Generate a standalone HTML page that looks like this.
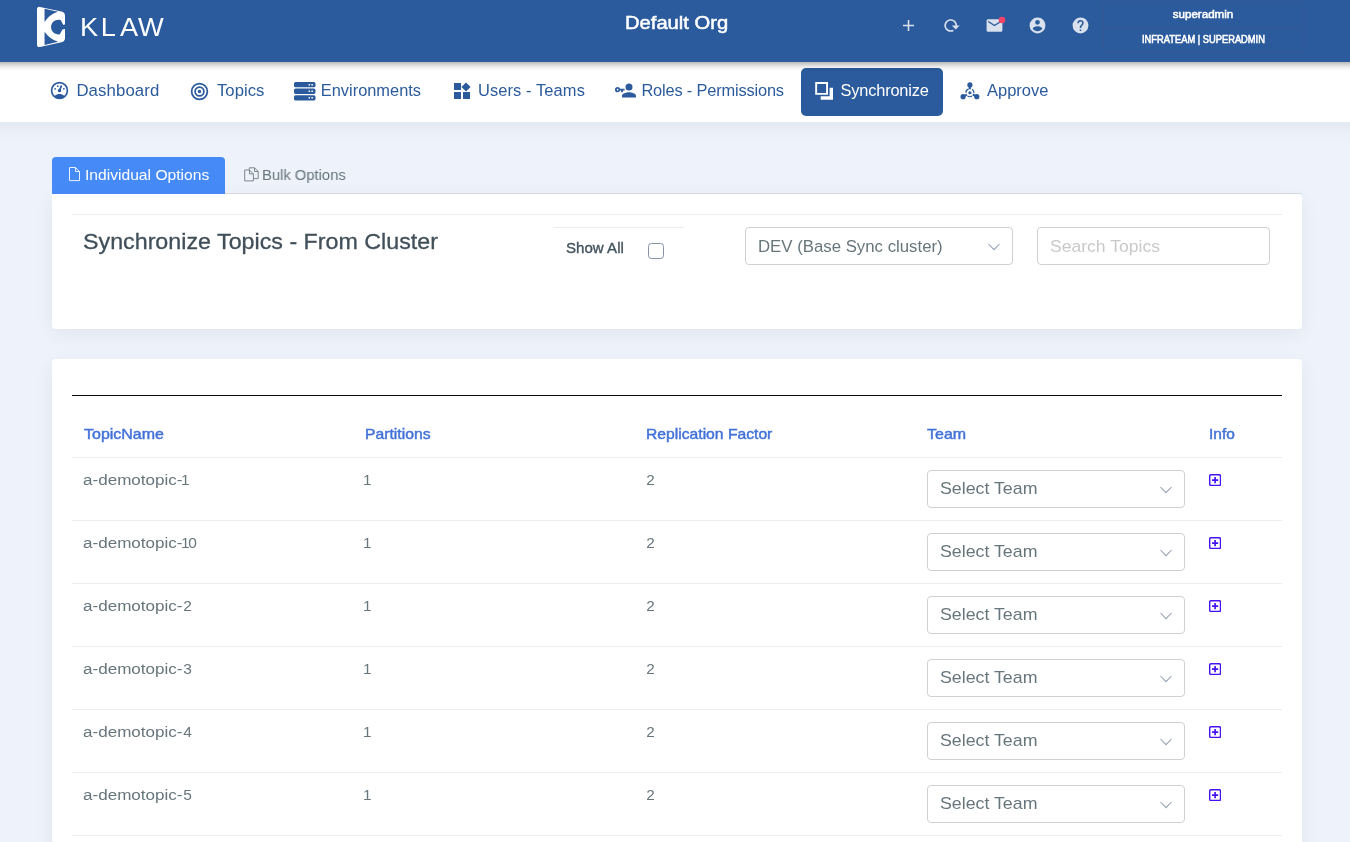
<!DOCTYPE html>
<html lang="en">
<head>
<meta charset="utf-8">
<title>Klaw - Synchronize Topics</title>
<style>
*{box-sizing:border-box}
html,body{margin:0;padding:0}
body{width:1350px;height:842px;overflow:hidden;background:#eef2fa;font-family:"Liberation Sans",Arial,sans-serif;color:#67757c;position:relative}
.t{position:absolute;white-space:nowrap;line-height:1;margin:0;padding:0;transform-origin:0 50%}
svg{display:block;position:absolute}
#topbar,#nav,#tabs,.card{will-change:transform}

/* ---------- top header ---------- */
#topbar{position:absolute;left:0;top:0;width:1350px;height:62px;background:#2b5b9c;z-index:5}
#topbar::before{content:"";position:absolute;left:-40px;right:-40px;top:0;height:62px;box-shadow:0 2px 7px rgba(0,0,0,.38);pointer-events:none}
#topbar .t{color:#fff}
.hicon{fill:#d9e0ee}
#userbox{position:absolute;left:1101.5px;top:1px;width:203px;height:52px;border:2px solid rgba(90,80,140,.12);border-radius:4px}
#userbox .row1{position:absolute;left:0;top:0;width:199px;height:25px;border-bottom:2px solid rgba(90,80,140,.12)}

/* ---------- nav ---------- */
#nav{position:absolute;left:0;top:62px;width:1350px;height:60px;background:#fff;z-index:3}
#nav::before{content:"";position:absolute;left:-60px;right:-60px;top:0;height:60px;box-shadow:0 5px 20px rgba(0,0,0,.06);pointer-events:none}
#nav .t{color:#2b5b9c;font-size:16.4px}
#nav svg{fill:#2b5b9c}
#nav .active{position:absolute;left:801px;top:6px;width:142px;height:48px;background:#2b5b9c;border-radius:5px}
#nav .active .t{color:#fff}
#nav .active svg{fill:#fff}

/* ---------- tabs ---------- */
#tabs{position:absolute;left:52px;top:157px;width:1250px;height:37px;border-bottom:1px solid #d9dde3}
#tabs .on{position:absolute;left:0;top:0;width:173px;height:37px;background:#468af8;border-radius:4px 4px 0 0}
#tabs .on .t{color:#fff}
#tabs .t{color:#67757c}

/* ---------- cards ---------- */
.card{position:absolute;left:52px;width:1250px;background:#fff;box-shadow:0 5px 20px rgba(0,0,0,.06)}
#card1{top:194px;height:135px;border-radius:0 4px 4px 4px}
#card2{top:359px;height:520px;border-radius:4px}
.hr{position:absolute;left:20px;width:1210px;height:1px;background:#ededed}
.field{position:absolute;height:38px;border:1px solid #d0d0d2;border-radius:4px;background:#fff}
.chev{stroke:#959fb2;stroke-width:1.050;fill:none}
#chk{position:absolute;left:596px;top:49px;width:16px;height:16px;border:1px solid #8492a4;border-radius:3.500px;background:#fff}

/* ---------- table ---------- */
table{position:absolute;left:20px;top:51px;width:1210px;border-collapse:collapse;table-layout:fixed}
th,td{padding:0;text-align:left;vertical-align:top;position:relative}
th{height:47px;color:#4272d8;font-weight:400;font-size:14.600px;-webkit-text-stroke:.45px #4272d8}
td{height:63px;border-top:1px solid #ededed;font-size:15.300px;color:#67757c}
td span.nm{left:11.100px;transform:scaleX(1.115);transform-origin:0 50%}
td span.nm b{position:static;display:inline-block;font-weight:400;transform:scaleX(.91);transform-origin:0 50%;margin-left:1.200px}
td span.nm b.one{margin-left:-1.700px;letter-spacing:-1.600px}
td span.d1{left:9.800px}
th span,td span{position:absolute;left:11.600px;white-space:nowrap;line-height:1;transform-origin:0 50%}
td .field{left:11px;top:12px;width:258px}
td .info{left:11.600px;top:16.250px}
</style>
</head>
<body>

<header id="topbar">
  <svg id="logo-mark" style="left:36px;top:6px" width="31" height="42" viewBox="0 0 31 42">
    <path fill="#fff" d="M1 3.600Q1 .5 4 .9L25.400 5.600Q29 6.400 29 10V32Q29 35.400 25.400 36.300L4 41Q1 41.400 1 38.400Z"/>
    <path fill="#2b5b9c" d="M8.550 2.850L22 5.850Q13.600 8.500 8.550 15.900Z"/>
    <path fill="#2b5b9c" d="M8.550 38.900L22.200 35.800Q13.600 33.100 8.550 25.700Z"/>
    <path fill="#2b5b9c" d="M23.700 13.800C18.500 13.400 15.100 16.600 15.100 21.100C15.100 25.600 18.500 28.800 23.700 28.400L26.400 23.600L29.100 23V18.300L27.300 18.900L24.900 14.300Z"/>
  </svg>
  <svg id="logo-text" style="left:0;top:0" width="200" height="62" viewBox="0 0 200 62"><text transform="scale(1.09,1)" x="73.500 92.500 110.100 126.700" y="35.600" fill="#fff" font-family="Liberation Sans, Arial, sans-serif" font-size="25">KLAW</text></svg>

  <div class="t" style="left:625.300px;top:13.800px;font-size:18.600px;-webkit-text-stroke:.5px #fff;transform:scaleX(1.085)">Default Org</div>

  <svg class="hicon" style="left:899px;top:15.800px" width="19" height="19" viewBox="0 0 24 24"><path d="M19,13H13V19H11V13H5V11H11V5H13V11H19V13Z"/></svg>
  <svg class="hicon" style="left:942px;top:15.800px" width="19" height="19" viewBox="0 0 24 24"><path d="M19,12H22.32L17.37,16.95L12.42,12H16.97C17,10.46 16.42,8.93 15.24,7.75C12.9,5.41 9.1,5.41 6.76,7.75C4.42,10.09 4.42,13.9 6.76,16.24C8.6,18.08 11.36,18.47 13.58,17.41L15.05,18.88C12,20.69 8,20.29 5.34,17.65C2.22,14.53 2.23,9.47 5.35,6.35C8.5,3.22 13.53,3.21 16.66,6.34C18.22,7.9 19,9.95 19,12Z"/></svg>
  <svg class="hicon" style="left:984.5px;top:15.800px" width="19" height="19" viewBox="0 0 24 24"><path d="M20,8L12,13L4,8V6L12,11L20,6M20,4H4C2.89,4 2,4.89 2,6V18A2,2 0 0,0 4,20H20A2,2 0 0,0 22,18V6C22,4.89 21.1,4 20,4Z"/></svg>
  <svg style="left:998px;top:16px" width="8" height="8" viewBox="0 0 8 8"><circle cx="4" cy="4" r="3.3" fill="#f2436a"/></svg>
  <svg class="hicon" style="left:1028px;top:16.300px" width="19" height="19" viewBox="0 0 24 24"><path d="M12,19.2C9.5,19.2 7.29,17.92 6,16C6.03,14 10,12.9 12,12.9C14,12.9 17.97,14 18,16C16.710,17.92 14.5,19.2 12,19.2M12,5A3,3 0 0,1 15,8A3,3 0 0,1 12,11A3,3 0 0,1 9,8A3,3 0 0,1 12,5M12,2A10,10 0 0,0 2,12A10,10 0 0,0 12,22A10,10 0 0,0 22,12C22,6.47 17.5,2 12,2Z"/></svg>
  <svg class="hicon" style="left:1071px;top:16.300px" width="19" height="19" viewBox="0 0 24 24"><path d="M15.07,11.25L14.17,12.17C13.45,12.89 13,13.5 13,15H11V14.5C11,13.39 11.45,12.39 12.17,11.67L13.41,10.41C13.78,10.05 14,9.55 14,9C14,7.89 13.1,7 12,7A2,2 0 0,0 10,9H8A4,4 0 0,1 12,5A4,4 0 0,1 16,9C16,9.88 15.64,10.67 15.07,11.25M13,19H11V17H13M12,2A10,10 0 0,0 2,12A10,10 0 0,0 12,22A10,10 0 0,0 22,12C22,6.47 17.5,2 12,2Z"/></svg>

  <div id="userbox">
    <div class="row1"></div>
    <div class="t" style="left:69.200px;top:5px;font-size:11.600px;-webkit-text-stroke:.55px #fff">superadmin</div>
    <div class="t" style="left:38.200px;top:31.600px;font-size:10.200px;-webkit-text-stroke:.55px #fff;transform:scaleX(.915)">INFRATEAM | SUPERADMIN</div>
  </div>
</header>

<nav id="nav">
  <svg style="left:49.200px;top:18.100px" width="21" height="21" viewBox="0 0 24 24"><path d="M12,2A10,10 0 0,0 2,12A10,10 0 0,0 12,22A10,10 0 0,0 22,12A10,10 0 0,0 12,2M12,4A8,8 0 0,1 20,12C20,14.4 19,16.5 17.3,18C15.9,16.7 14,16 12,16C10,16 8.2,16.7 6.700,18C5,16.5 4,14.4 4,12A8,8 0 0,1 12,4M14,5.890C13.62,5.9 13.26,6.15 13.1,6.54L11.81,9.77L11.71,10C11,10.13 10.41,10.6 10.14,11.26C9.73,12.29 10.23,13.45 11.26,13.86C12.29,14.27 13.45,13.77 13.86,12.74C14.12,12.08 14,11.32 13.57,10.76L13.67,10.5L14.96,7.29L14.97,7.26C15.17,6.75 14.92,6.17 14.41,5.96C14.28,5.91 14.15,5.89 14,5.890M10,6A1,1 0 0,0 9,7A1,1 0 0,0 10,8A1,1 0 0,0 11,7A1,1 0 0,0 10,6M7,9A1,1 0 0,0 6,10A1,1 0 0,0 7,11A1,1 0 0,0 8,10A1,1 0 0,0 7,9M17,9A1,1 0 0,0 16,10A1,1 0 0,0 17,11A1,1 0 0,0 18,10A1,1 0 0,0 17,9Z"/></svg>
  <div class="t" style="left:76.4px;top:21px;font-size:16.800px;letter-spacing:.1px">Dashboard</div>

  <svg style="left:189.450px;top:18.900px" width="21" height="21" viewBox="0 0 24 24"><path d="M12,2A10,10 0 0,0 2,12A10,10 0 0,0 12,22A10,10 0 0,0 22,12A10,10 0 0,0 12,2M12,4A8,8 0 0,1 20,12A8,8 0 0,1 12,20A8,8 0 0,1 4,12A8,8 0 0,1 12,4M12,6A6,6 0 0,0 6,12A6,6 0 0,0 12,18A6,6 0 0,0 18,12A6,6 0 0,0 12,6M12,8A4,4 0 0,1 16,12A4,4 0 0,1 12,16A4,4 0 0,1 8,12A4,4 0 0,1 12,8M12,10A2,2 0 0,0 10,12A2,2 0 0,0 12,14A2,2 0 0,0 14,12A2,2 0 0,0 12,10Z"/></svg>
  <div class="t" style="left:216.900px;top:20.300px;font-size:16.500px;transform:scaleX(1.012)">Topics</div>

  <svg style="left:294px;top:20px" width="21.5" height="18.5" viewBox="0 0 21.5 18.5"><path fill-rule="evenodd" d="M1.6 0H19.9A1.6 1.6 0 0 1 21.500 1.6V3.700A1.6 1.6 0 0 1 19.9 5.300H1.6A1.6 1.6 0 0 1 0 3.700V1.600A1.6 1.6 0 0 1 1.600 0ZM14.6 1.900V3.400H16.1V1.900ZM17.4 1.900V3.400H18.900V1.900ZM1.6 6.600H19.9A1.600 1.600 0 0 1 21.500 8.200V10.300A1.600 1.600 0 0 1 19.900 11.900H1.600A1.600 1.600 0 0 1 0 10.300V8.200A1.600 1.600 0 0 1 1.600 6.600ZM14.600 8.500V10H16.100V8.500ZM17.400 8.500V10H18.900V8.500ZM1.600 13.200H19.900A1.600 1.600 0 0 1 21.500 14.800V16.900A1.600 1.600 0 0 1 19.900 18.500H1.600A1.600 1.600 0 0 1 0 16.900V14.800A1.600 1.600 0 0 1 1.600 13.200ZM14.600 15.100V16.600H16.100V15.100ZM17.400 15.100V16.600H18.900V15.100Z"/></svg>
  <div class="t" style="left:320.8px;top:20.3px;font-size:16.4px">Environments</div>

  <svg style="left:454px;top:20px" width="17" height="17" viewBox="0 0 17 17"><path d="M0 1H7V8H0ZM0 10H7V17H0ZM9 10H16V17H9ZM12 .4L16.600 5L12 9.600L7.400 5Z"/></svg>
  <div class="t" style="left:478px;top:20.3px;font-size:16.450px;letter-spacing:.1px">Users - Teams</div>

  <svg style="left:615px;top:18px" width="21" height="21" viewBox="0 0 24 24"><path d="M11,10V12H9V14H7V12H5.8C5.4,13.2 4.3,14 3,14A3,3 0 0,1 0,11A3,3 0 0,1 3,8C4.3,8 5.4,8.8 5.8,10H11M3,10A1,1 0 0,0 2,11A1,1 0 0,0 3,12A1,1 0 0,0 4,11A1,1 0 0,0 3,10M16,14C18.67,14 24,15.34 24,18V20H8V18C8,15.34 13.33,14 16,14M16,12A4,4 0 0,1 12,8A4,4 0 0,1 16,4A4,4 0 0,1 20,8A4,4 0 0,1 16,12Z"/></svg>
  <div class="t" style="left:641.4px;top:20.3px;font-size:16.400px;letter-spacing:-.17px">Roles - Permissions</div>

  <div class="active">
    <svg style="left:14px;top:14px" width="18" height="18" viewBox="0 0 18 18"><path fill-rule="evenodd" d="M.2 0H13V12.800H.2ZM2.100 1.900V10.900H11.100V1.900ZM14.600 5.700H18V17.800H5.700V14.200H14.600Z"/></svg>
    <div class="t" style="left:39.6px;top:14.3px;font-size:16.4px;letter-spacing:-.2px">Synchronize</div>
  </div>

  <svg style="left:960px;top:18px" width="20" height="20" viewBox="0 0 20 20"><circle cx="9.900" cy="4.900" r="2.600"/><circle cx="3.100" cy="16.700" r="2.600"/><circle cx="16.800" cy="16.700" r="2.600"/><circle cx="9.900" cy="12.750" r="1.600"/><circle cx="9.900" cy="12.750" r="4" fill="none" stroke="#2b5b9c" stroke-width="1.200" stroke-dasharray="4.900 3.480" stroke-dashoffset="-3.840"/><path fill="none" stroke="#2b5b9c" stroke-width="2" d="M9.900 6.500V9.300M3.600 16.400L7 14.500M16.300 16.400L12.800 14.500"/></svg>
  <div class="t" style="left:987px;top:20.3px;font-size:16.5px">Approve</div>
</nav>

<div id="tabs">
  <div class="on">
    <svg style="left:17px;top:9.900px" width="11" height="15" viewBox="0 0 11 15"><path fill="none" stroke="#e9f0ff" stroke-width="1" d="M.5 .5H6.500L10.500 4.500V13.600H.5ZM6.500 .5V4.500H10.500"/></svg>
    <div class="t" style="left:33px;top:9.900px;font-size:15px;transform:scaleX(1.042)">Individual Options</div>
  </div>
  <svg style="left:192px;top:9.700px" width="15" height="15" viewBox="0 0 15 15"><path fill="none" stroke="#7b878e" stroke-width="1" d="M.7 3H5.500L9.400 6.900V13.900H.7ZM5.500 3V6.900H9.400M5.300 2.800V.8H10.500L14.200 4.500V11.600H9.700M10.500 .8V4.500H14.200"/></svg>
  <div class="t" style="left:210px;top:9.900px;font-size:15px;transform:scaleX(.985)">Bulk Options</div>
</div>

<section class="card" id="card1">
  <div class="hr" style="top:20px"></div>
  <h3 class="t" style="left:31px;top:37px;font-size:22px;transform:scaleX(1.057);font-weight:400;color:#414f59;-webkit-text-stroke:.3px #414f59">Synchronize Topics - From Cluster</h3>
  <div style="position:absolute;left:502px;top:33px;width:130px;height:1px;background:#ececec"></div>
  <label class="t" style="left:514.400px;top:46.900px;font-size:14.800px;font-weight:400;-webkit-text-stroke:.35px #42535d;color:#42535d;transform:scaleX(1.02)">Show All</label>
  <div id="chk"></div>
  <div class="field" style="left:693px;top:33px;width:268px">
    <div class="t" style="left:12px;top:10.500px;font-size:16.800px">DEV (Base Sync cluster)</div>
    <svg style="left:241px;top:14.600px" width="14" height="9" viewBox="0 0 14 9"><path class="chev" d="M1.500 1L7 6.700L12.500 1"/></svg>
  </div>
  <div class="field" style="left:985px;top:33px;width:233px">
    <div class="t" style="left:12px;top:11px;font-size:16.800px;transform:scaleX(1.046);color:#c9c9c9">Search Topics</div>
  </div>
</section>

<section class="card" id="card2">
  <div class="hr" style="top:36px;background:#0c0c0c"></div>
  <table>
    <colgroup><col style="width:281.300px"><col style="width:281.300px"><col style="width:281.300px"><col style="width:281.300px"><col></colgroup>
    <thead>
      <tr><th><span style="top:16.600px;transform:scaleX(1.095)">TopicName</span></th><th><span style="top:16.600px;transform:scaleX(1.078)">Partitions</span></th><th><span style="top:16.600px;transform:scaleX(1.074)">Replication Factor</span></th><th><span style="top:16.600px;transform:scaleX(1.095)">Team</span></th><th><span style="top:16.600px;transform:scaleX(1.06)">Info</span></th></tr>
    </thead>
    <tbody>
      <tr><td><span class="nm" style="top:14.200px">a-demotopic-<b class="one">1</b></span></td><td><span class="d1" style="top:14.200px">1</span></td><td><span style="top:14.200px">2</span></td><td><div class="field"><div class="t" style="left:12.600px;top:9.800px;font-size:17px;transform:scaleX(1.045)">Select Team</div><svg style="left:231px;top:15.100px" width="14" height="9" viewBox="0 0 14 9"><path class="chev" d="M1.500 1L7 6.700L12.500 1"/></svg></div></td><td><svg class="info" width="12.200" height="12.200" viewBox="0 0 12.200 12.200"><rect x=".7" y=".7" width="10.800" height="10.800" rx="1.200" fill="none" stroke="#4612f2" stroke-width="1.400"/><path d="M3 6.100H9.200M6.100 3V9.200" stroke="#4612f2" stroke-width="1.700" fill="none"/></svg></td></tr>
      <tr><td><span class="nm" style="top:14.200px">a-demotopic-<b class="one">10</b></span></td><td><span class="d1" style="top:14.200px">1</span></td><td><span style="top:14.200px">2</span></td><td><div class="field"><div class="t" style="left:12.600px;top:9.800px;font-size:17px;transform:scaleX(1.045)">Select Team</div><svg style="left:231px;top:15.100px" width="14" height="9" viewBox="0 0 14 9"><path class="chev" d="M1.500 1L7 6.700L12.500 1"/></svg></div></td><td><svg class="info" width="12.200" height="12.200" viewBox="0 0 12.200 12.200"><rect x=".7" y=".7" width="10.800" height="10.800" rx="1.200" fill="none" stroke="#4612f2" stroke-width="1.400"/><path d="M3 6.100H9.200M6.100 3V9.200" stroke="#4612f2" stroke-width="1.700" fill="none"/></svg></td></tr>
      <tr><td><span class="nm" style="top:14.200px">a-demotopic-<b>2</b></span></td><td><span class="d1" style="top:14.200px">1</span></td><td><span style="top:14.200px">2</span></td><td><div class="field"><div class="t" style="left:12.600px;top:9.800px;font-size:17px;transform:scaleX(1.045)">Select Team</div><svg style="left:231px;top:15.100px" width="14" height="9" viewBox="0 0 14 9"><path class="chev" d="M1.500 1L7 6.700L12.500 1"/></svg></div></td><td><svg class="info" width="12.200" height="12.200" viewBox="0 0 12.200 12.200"><rect x=".7" y=".7" width="10.800" height="10.800" rx="1.200" fill="none" stroke="#4612f2" stroke-width="1.400"/><path d="M3 6.100H9.200M6.100 3V9.200" stroke="#4612f2" stroke-width="1.700" fill="none"/></svg></td></tr>
      <tr><td><span class="nm" style="top:14.200px">a-demotopic-<b>3</b></span></td><td><span class="d1" style="top:14.200px">1</span></td><td><span style="top:14.200px">2</span></td><td><div class="field"><div class="t" style="left:12.600px;top:9.800px;font-size:17px;transform:scaleX(1.045)">Select Team</div><svg style="left:231px;top:15.100px" width="14" height="9" viewBox="0 0 14 9"><path class="chev" d="M1.500 1L7 6.700L12.500 1"/></svg></div></td><td><svg class="info" width="12.200" height="12.200" viewBox="0 0 12.200 12.200"><rect x=".7" y=".7" width="10.800" height="10.800" rx="1.200" fill="none" stroke="#4612f2" stroke-width="1.400"/><path d="M3 6.100H9.200M6.100 3V9.200" stroke="#4612f2" stroke-width="1.700" fill="none"/></svg></td></tr>
      <tr><td><span class="nm" style="top:14.200px">a-demotopic-<b>4</b></span></td><td><span class="d1" style="top:14.200px">1</span></td><td><span style="top:14.200px">2</span></td><td><div class="field"><div class="t" style="left:12.600px;top:9.800px;font-size:17px;transform:scaleX(1.045)">Select Team</div><svg style="left:231px;top:15.100px" width="14" height="9" viewBox="0 0 14 9"><path class="chev" d="M1.500 1L7 6.700L12.500 1"/></svg></div></td><td><svg class="info" width="12.200" height="12.200" viewBox="0 0 12.200 12.200"><rect x=".7" y=".7" width="10.800" height="10.800" rx="1.200" fill="none" stroke="#4612f2" stroke-width="1.400"/><path d="M3 6.100H9.200M6.100 3V9.200" stroke="#4612f2" stroke-width="1.700" fill="none"/></svg></td></tr>
      <tr><td><span class="nm" style="top:14.200px">a-demotopic-<b>5</b></span></td><td><span class="d1" style="top:14.200px">1</span></td><td><span style="top:14.200px">2</span></td><td><div class="field"><div class="t" style="left:12.600px;top:9.800px;font-size:17px;transform:scaleX(1.045)">Select Team</div><svg style="left:231px;top:15.100px" width="14" height="9" viewBox="0 0 14 9"><path class="chev" d="M1.500 1L7 6.700L12.500 1"/></svg></div></td><td><svg class="info" width="12.200" height="12.200" viewBox="0 0 12.200 12.200"><rect x=".7" y=".7" width="10.800" height="10.800" rx="1.200" fill="none" stroke="#4612f2" stroke-width="1.400"/><path d="M3 6.100H9.200M6.100 3V9.200" stroke="#4612f2" stroke-width="1.700" fill="none"/></svg></td></tr>
      <tr><td><span class="nm" style="top:14.200px">a-demotopic-<b>6</b></span></td><td><span class="d1" style="top:14.200px">1</span></td><td><span style="top:14.200px">2</span></td><td><div class="field"><div class="t" style="left:12.600px;top:9.800px;font-size:17px;transform:scaleX(1.045)">Select Team</div><svg style="left:231px;top:15.100px" width="14" height="9" viewBox="0 0 14 9"><path class="chev" d="M1.500 1L7 6.700L12.500 1"/></svg></div></td><td><svg class="info" width="12.200" height="12.200" viewBox="0 0 12.200 12.200"><rect x=".7" y=".7" width="10.800" height="10.800" rx="1.200" fill="none" stroke="#4612f2" stroke-width="1.400"/><path d="M3 6.100H9.200M6.100 3V9.200" stroke="#4612f2" stroke-width="1.700" fill="none"/></svg></td></tr>
    </tbody>
  </table>
</section>

</body>
</html>
